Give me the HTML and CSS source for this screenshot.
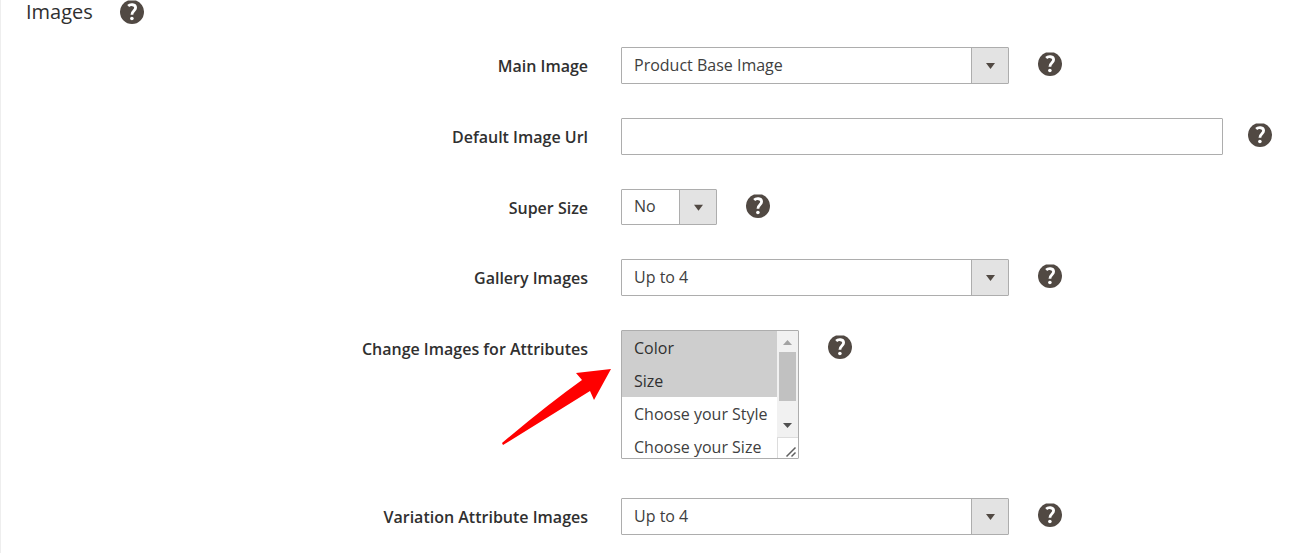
FILE: index.html
```html
<!DOCTYPE html>
<html lang="en">
<head>
    <meta charset="UTF-8">
    <meta name="viewport" content="width=device-width, initial-scale=1.0">
    <title>Images</title>
    <link rel="stylesheet" href="styles.css">
</head>
<body>
    <!-- Shared icons -->
    <svg class="icon-defs" aria-hidden="true">
        <symbol id="icon-help" viewBox="0 0 24 24">
            <path d="M8 0.5H16A12 12 0 0 1 24 12A12 12 0 0 1 0 12A12 12 0 0 1 8 0.5Z" fill="#514943"/>
            <path d="M8.2 6C10 4.2 15.6 3.9 15.6 7.8C15.6 10.8 11.9 10.8 11.9 14.8" fill="none" stroke="#fff" stroke-width="2.8"/>
            <circle cx="11.9" cy="18.5" r="1.8" fill="#fff"/>
        </symbol>
    </svg>

    <form class="images-form">
        <div class="section-title">
            <h2>Images</h2>
            <button type="button" class="help" aria-label="About images"><svg><use href="#icon-help"/></svg></button>
        </div>

        <div class="field">
            <label for="mainImage">Main Image</label>
            <div class="control">
                <select id="mainImage" class="select wide">
                    <option>Product Base Image</option>
                </select>
                <button type="button" class="help" aria-label="About main image"><svg><use href="#icon-help"/></svg></button>
            </div>
        </div>

        <div class="field">
            <label for="defaultUrl">Default Image Url</label>
            <div class="control control-text">
                <input type="text" id="defaultUrl" name="defaultUrl">
                <button type="button" class="help" aria-label="About default image url"><svg><use href="#icon-help"/></svg></button>
            </div>
        </div>

        <div class="field">
            <label for="superSize">Super Size</label>
            <div class="control">
                <select id="superSize" class="select narrow">
                    <option>No</option>
                    <option>Yes</option>
                </select>
                <button type="button" class="help" aria-label="About super size"><svg><use href="#icon-help"/></svg></button>
            </div>
        </div>

        <div class="field">
            <label for="galleryImages">Gallery Images</label>
            <div class="control">
                <select id="galleryImages" class="select wide">
                    <option>Up to 4</option>
                </select>
                <button type="button" class="help" aria-label="About gallery images"><svg><use href="#icon-help"/></svg></button>
            </div>
        </div>

        <div class="field field-multi">
            <label for="attributes">Change Images for Attributes</label>
            <div class="control">
                <div class="list">
                    <select id="attributes" class="multiselect" multiple>
                        <option selected>Color</option>
                        <option selected>Size</option>
                        <option>Choose your Style</option>
                        <option>Choose your Size</option>
                        <option>Material</option>
                        <option>Pattern</option>
                    </select>
                    <!-- Scroll bar and resize grip -->
                    <svg class="scrollbar" viewBox="0 0 21 127" aria-hidden="true">
                        <path d="M0 0H21V107H0Z" fill="#f1f1f1"/>
                        <path d="M0 107H21V127H0Z" fill="#fff"/>
                        <path d="M0 106.5H21M0.5 107V127" stroke="#dcdcdc"/>
                        <path d="M2 21H19V70H2Z" fill="#c1c1c1"/>
                        <path d="M6 14L10.5 9L15 14Z" fill="#a3a3a3"/>
                        <path d="M6 92L10.5 97L15 92Z" fill="#505050"/>
                        <path d="M9.5 125.500L18.500 116.500M14.500 125.500L18.500 121.500" fill="none" stroke="#606060" stroke-width="1.5"/>
                    </svg>
                </div>
                <button type="button" class="help" aria-label="About attributes"><svg><use href="#icon-help"/></svg></button>
                <svg class="pointer" viewBox="0 0 110 78" aria-hidden="true">
                    <path d="M109 0L74 4L80 11Q45 36 0 74L1 76L88 22L92 31Z" fill="#f00"/>
                </svg>
            </div>
        </div>

        <div class="field">
            <label for="variationImages">Variation Attribute Images</label>
            <div class="control">
                <select id="variationImages" class="select wide">
                    <option>Up to 4</option>
                </select>
                <button type="button" class="help" aria-label="About variation images"><svg><use href="#icon-help"/></svg></button>
            </div>
        </div>
    </form>
</body>
</html>
```
FILE: styles.css
```css
* {
    box-sizing: border-box;
}
body {
    margin: 0;
    background-color: #fff;
    color: #303030;
    font-family: "Open Sans", "Noto Sans", sans-serif;
    font-size: 16px;
    line-height: 22px;
}
.icon-defs {
    display: none;
}
.images-form {
    min-height: 100vh;
    border-left: 1px solid #eee;
}
.section-title {
    display: flex;
    align-items: center;
    gap: 27px;
    height: 24px;
    margin-bottom: 23px;
    padding-left: 25px;
}
.section-title h2 {
    margin: 0;
    font-size: 20px;
    font-weight: 500;
}
.help {
    flex: none;
    width: 24px;
    height: 24px;
    margin-top: 5px;
    padding: 0;
    border: none;
    background: none;
    cursor: pointer;
}
.section-title .help {
    margin-top: 0;
}
.help svg {
    display: block;
    width: 24px;
    height: 24px;
}
.field {
    display: grid;
    grid-template-columns: 45.4% 1fr;
    column-gap: 33px;
    margin-bottom: 34px;
}
.field label {
    padding-top: 8px;
    font-weight: 600;
    text-align: right;
}
.control {
    position: relative;
    display: flex;
    align-items: flex-start;
    gap: 29px;
}
.control-text {
    gap: 25px;
    padding-right: 22px;
}
input[type="text"] {
    flex: 1;
    min-width: 0;
    height: 37px;
    padding: 0 12px;
    border: 1px solid #adadad;
    border-radius: 1px;
    color: #303030;
    font: inherit;
}
.select {
    appearance: none;
    height: 37px;
    padding: 0 50px 2px 12px;
    border: 1px solid #adadad;
    border-radius: 1px;
    background-color: #fff;
    background-image:
        url("data:image/svg+xml,%3Csvg xmlns='http://www.w3.org/2000/svg' width='37' height='35'%3E%3Cpath d='M0 0H37V35H0Z' fill='%23e3e3e3'/%3E%3Cpath d='M0 0H1V35H0Z' fill='%23adadad'/%3E%3Cpath d='M15 15H24L19.5 21Z' fill='%23514943'/%3E%3C/svg%3E");
    background-position: right center;
    background-repeat: no-repeat;
    color: #404040;
    font: inherit;
}
.wide {
    width: 388px;
}
.narrow {
    width: 96px;
    height: 36px;
}
.field-multi {
    margin-bottom: 39px;
}
.list {
    position: relative;
    width: 178px;
}
.multiselect {
    display: block;
    width: 100%;
    height: 129px;
    padding: 0;
    overflow-y: scroll;
    scrollbar-width: none;
    border: 1px solid #adadad;
    border-radius: 1px;
    background-color: #fff;
    color: #404040;
    font: inherit;
}
.multiselect option {
    min-height: 33px;
    padding: 6px 12px 5px;
    line-height: 22px;
}
.multiselect option:checked {
    background: #cecece linear-gradient(#cecece, #cecece);
    color: #303030;
}
.scrollbar {
    position: absolute;
    top: 1px;
    right: 1px;
    width: 21px;
    height: 127px;
    pointer-events: none;
}
/* Arrow laid over the gap between label and list */
.pointer {
    position: absolute;
    top: 39px;
    right: 100%;
    width: 110px;
    height: 78px;
    margin-right: 9px;
    pointer-events: none;
}
```
